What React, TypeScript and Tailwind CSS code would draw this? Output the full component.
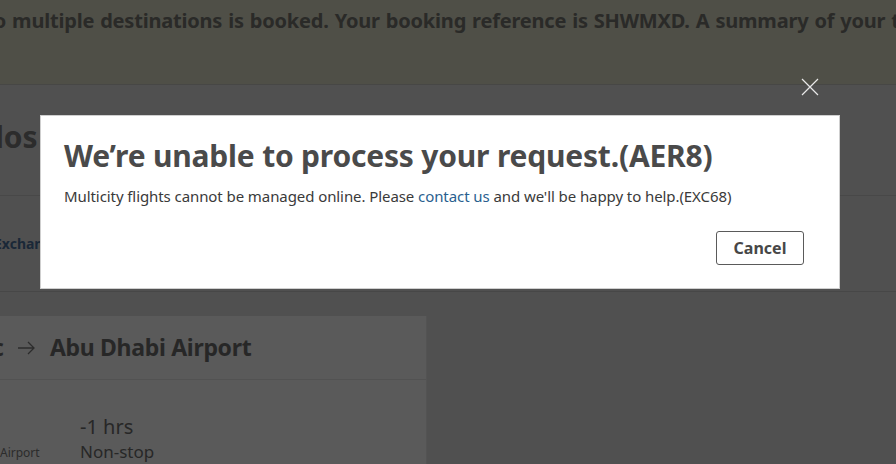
import React from "react";

const font = { fontFamily: '"Noto Sans", "Open Sans", Arial, sans-serif' };

function CloseIcon() {
  return (
    <svg width="18" height="18" viewBox="0 0 18 18" fill="none">
      <path d="M1 1L17 17M17 1L1 17" stroke="#e8e8e8" strokeWidth="1.2" />
    </svg>
  );
}

export default function App() {
  return (
    <div className="relative w-[896px] h-[464px] overflow-hidden bg-[#dedede]" style={font}>
      {/* page underneath */}
      <div className="flex flex-col">
        <div className="h-[85px] bg-[#dadac4] border-b border-[#c4c4be] overflow-hidden whitespace-nowrap">
          <p className="ml-[-58px] mt-[6px] text-[20px] font-bold text-[#75756f] tracking-[-0.2px] [word-spacing:1px]">
            Trip to multiple destinations is booked. Your booking reference is SHWMXD. A summary of your trip information
          </p>
        </div>
        <div className="h-[111px] border-b border-[#c8c8c8] flex items-center overflow-hidden whitespace-nowrap">
          <h1 className="ml-[-141px] mt-[-8px] text-[30px] font-bold text-[#7a7a7a]">Hello Carlos</h1>
        </div>
        <div className="h-[96px] border-b border-[#c6c6c6] flex items-center overflow-hidden whitespace-nowrap">
          <span className="ml-[-6px] text-[14px] font-bold text-[#4a6f9a]">Exchange</span>
        </div>
        <div className="pt-[24px]">
          <div className="w-[427px] h-[160px] bg-[#f8f8f8] border-r border-[#e6e6e6] flex flex-col">
            <div className="h-[64px] border-b border-[#e4e4e4] flex items-center gap-[13px] whitespace-nowrap overflow-hidden">
              <span className="ml-[-8px] text-[23px] font-bold text-[#6e6e6e]">c</span>
              <svg width="18" height="14" viewBox="0 0 18 14" fill="none">
                <path d="M1 7H17M11 1L17 7L11 13" stroke="#7a7a7a" strokeWidth="1.3" />
              </svg>
              <span className="ml-[2px] text-[23px] font-bold text-[#6e6e6e] tracking-[-0.3px]">Abu Dhabi Airport</span>
            </div>
            <div className="flex items-end">
              <span className="w-[80px] pb-[2px] text-[12px] text-[#7a7a7a]">Airport</span>
              <div className="flex flex-col pt-[34px]">
                <span className="text-[20px] leading-[26px] text-[#6e6e6e]">-1 hrs</span>
                <span className="text-[17px] leading-[24px] text-[#6e6e6e]">Non-stop</span>
              </div>
            </div>
          </div>
        </div>
      </div>

      {/* modal overlay */}
      <div className="absolute inset-0 bg-[rgba(0,0,0,0.64)]">
        <button className="absolute left-[801px] top-[78px]" aria-label="Close">
          <CloseIcon />
        </button>
        <div className="absolute left-[40px] top-[115px] w-[800px] h-[174px] bg-white border border-[#cfcfcf] px-[23px] pt-[20px]">
          <h2 className="text-[30px] leading-[40px] font-bold text-[#4a4a4a] tracking-[-0.2px]">
            We’re unable to process your request.(AER8)
          </h2>
          <p className="mt-[10px] text-[15px] leading-[20px] text-[#3a3a3a] tracking-[-0.08px]">
            Multicity flights cannot be managed online. Please{" "}
            <a className="text-[#2a5f8f]">contact us</a> and we'll be happy to help.(EXC68)
          </p>
          <div className="flex justify-end mt-[25px] pr-[12px]">
            <button className="w-[88px] h-[34px] border border-[#5a5a5a] rounded-[3px] text-[16px] font-bold text-[#474747]">
              Cancel
            </button>
          </div>
        </div>
      </div>
    </div>
  );
}
